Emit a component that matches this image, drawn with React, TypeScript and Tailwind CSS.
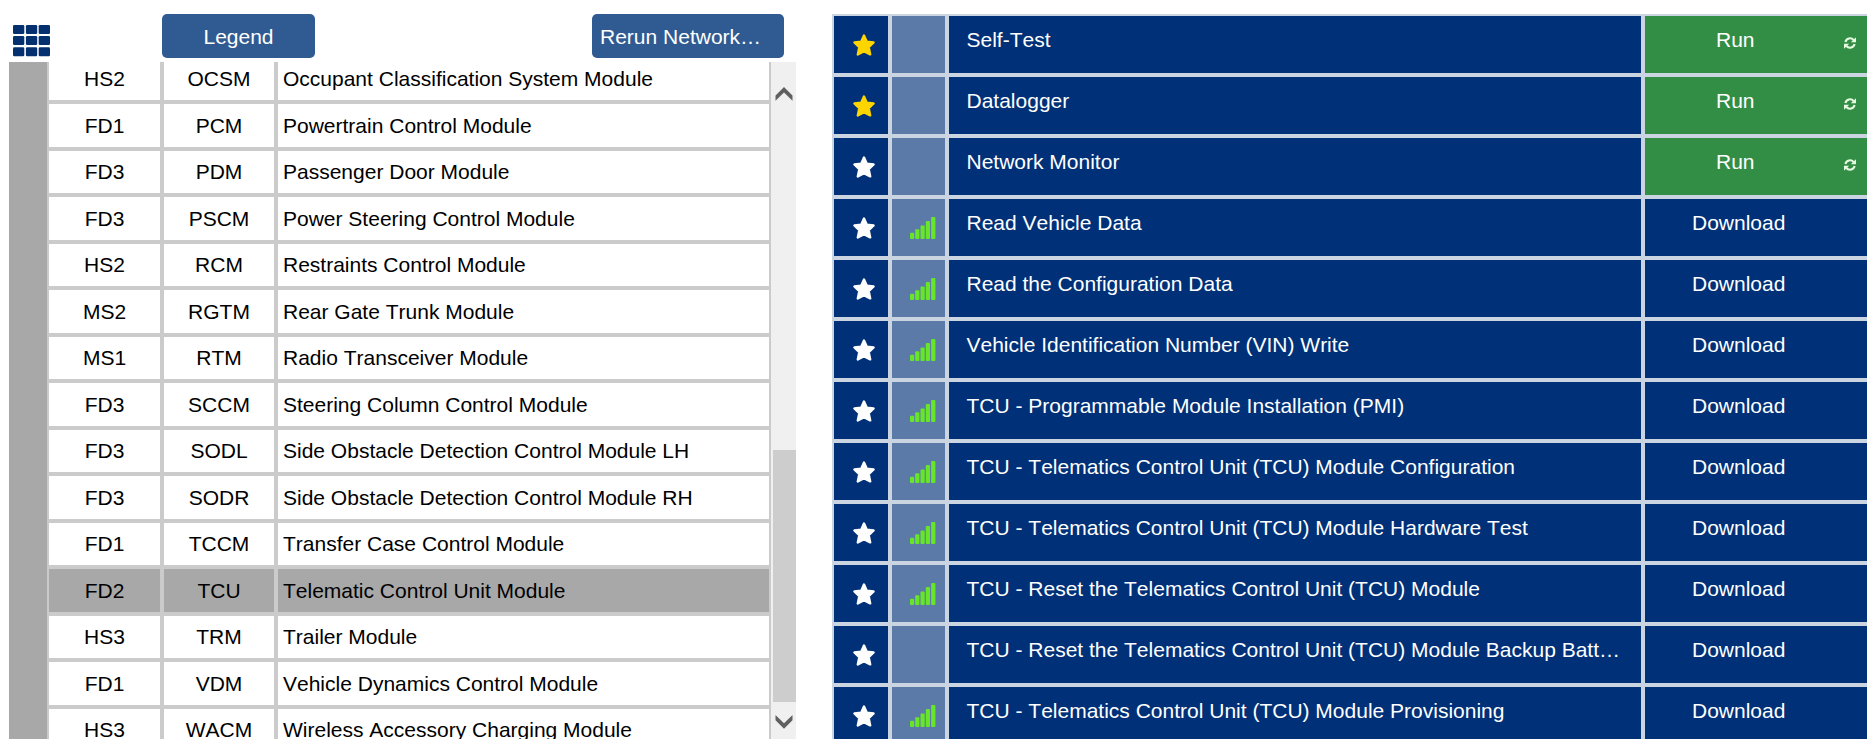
type Module = {
  bus: string;
  code: string;
  name: string;
};

type Task = {
  label: string;
  action: "Run" | "Download";
  favorite?: boolean;
  online?: boolean;
};

const modules: Module[] = [
  { bus: "HS2", code: "OCSM", name: "Occupant Classification System Module" },
  { bus: "FD1", code: "PCM", name: "Powertrain Control Module" },
  { bus: "FD3", code: "PDM", name: "Passenger Door Module" },
  { bus: "FD3", code: "PSCM", name: "Power Steering Control Module" },
  { bus: "HS2", code: "RCM", name: "Restraints Control Module" },
  { bus: "MS2", code: "RGTM", name: "Rear Gate Trunk Module" },
  { bus: "MS1", code: "RTM", name: "Radio Transceiver Module" },
  { bus: "FD3", code: "SCCM", name: "Steering Column Control Module" },
  { bus: "FD3", code: "SODL", name: "Side Obstacle Detection Control Module LH" },
  { bus: "FD3", code: "SODR", name: "Side Obstacle Detection Control Module RH" },
  { bus: "FD1", code: "TCCM", name: "Transfer Case Control Module" },
  { bus: "FD2", code: "TCU", name: "Telematic Control Unit Module" },
  { bus: "HS3", code: "TRM", name: "Trailer Module" },
  { bus: "FD1", code: "VDM", name: "Vehicle Dynamics Control Module" },
  { bus: "HS3", code: "WACM", name: "Wireless Accessory Charging Module" },
];

const tasks: Task[] = [
  { label: "Self-Test", action: "Run", favorite: true },
  { label: "Datalogger", action: "Run", favorite: true },
  { label: "Network Monitor", action: "Run" },
  { label: "Read Vehicle Data", action: "Download", online: true },
  { label: "Read the Configuration Data", action: "Download", online: true },
  { label: "Vehicle Identification Number (VIN) Write", action: "Download", online: true },
  { label: "TCU - Programmable Module Installation (PMI)", action: "Download", online: true },
  { label: "TCU - Telematics Control Unit (TCU) Module Configuration", action: "Download", online: true },
  { label: "TCU - Telematics Control Unit (TCU) Module Hardware Test", action: "Download", online: true },
  { label: "TCU - Reset the Telematics Control Unit (TCU) Module", action: "Download", online: true },
  { label: "TCU - Reset the Telematics Control Unit (TCU) Module Backup Battery", action: "Download" },
  { label: "TCU - Telematics Control Unit (TCU) Module Provisioning", action: "Download", online: true },
];

function GridIcon() {
  return (
    <svg viewBox="0 0 37 32" className="h-8 w-[37px]" fill="#05306f">
      {[0, 11, 22.2].map((y) =>
        [0, 12.9, 25.7].map((x) => <rect key={`${x}-${y}`} x={x} y={y} width="11.3" height="9" rx="1.3" />),
      )}
    </svg>
  );
}

function StarIcon({ active }: { active?: boolean }) {
  return (
    <svg
      viewBox="0 0 24 24"
      className={`h-6 w-6 ${active ? "text-[#ffd500]" : "text-white"}`}
      fill="currentColor"
      stroke="currentColor"
      strokeWidth="2.4"
      strokeLinejoin="round"
    >
      <path d="M12 2.6L14.8 8.7L21.6 9.5L16.7 14.2L18.2 21.4L12 18.2L5.8 21.4L7.3 14.2L2.4 9.5L9.2 8.7Z" />
    </svg>
  );
}

function SignalIcon() {
  return (
    <svg viewBox="0 0 26 22" className="h-[22px] w-[26px]" fill="#66e529">
      <rect x="0" y="15.8" width="4.2" height="6.2" rx="1" />
      <rect x="5.2" y="12.2" width="4.2" height="9.8" rx="1" />
      <rect x="10.5" y="8.4" width="4.2" height="13.6" rx="1" />
      <rect x="15.8" y="4" width="4.2" height="18" rx="1" />
      <rect x="21.1" y="0" width="4.3" height="22" rx="1" />
    </svg>
  );
}

function RefreshIcon() {
  return (
    <svg viewBox="0 0 12 12" className="h-3 w-3" fill="none" stroke="#e6fbe2" strokeWidth="2.1">
      <path d="M1.4 5A4.7 4.7 0 0 1 9.6 3M10.6 7A4.7 4.7 0 0 1 2.4 9" />
      <path d="M12 0.3V5.3H6.8ZM0 11.7V6.7H5.2Z" fill="#e6fbe2" stroke="none" />
    </svg>
  );
}

function Chevron({ down }: { down?: boolean }) {
  return (
    <svg viewBox="0 0 18 14" className="h-3.5 w-[18px]" fill="#606060">
      {down ? <path d="M0.5 0V5.3L9 13.7L17.5 5.3V0L9 8.2Z" /> : <path d="M0.5 13.7V8.4L9 0L17.5 8.4V13.7L9 5.5Z" />}
    </svg>
  );
}

function ModuleRow({ module, first }: { module: Module; first: boolean }) {
  const selected = module.code === "TCU";
  const cell = selected ? "bg-[#a8a8a8]" : "bg-white";

  return (
    <div
      className={`grid shrink-0 grid-cols-[111px_110px_491px] gap-x-1 border-b-4 border-[#cbcbcb] leading-6 ${first ? "h-[42px]" : "h-[46.5px]"}`}
    >
      <div className={`flex items-end justify-center pb-[9px] ${cell}`}>{module.bus}</div>
      <div className={`flex items-end justify-center pb-[9px] ${cell}`}>{module.code}</div>
      <div className={`flex items-end pb-[9px] pl-[5px] ${cell}`}>{module.name}</div>
    </div>
  );
}

function ModulePanel() {
  return (
    <section className="flex w-[796px] shrink-0 flex-col pl-[9px]">
      <div className="flex h-[62px] shrink-0">
        <div className="ml-1 mt-[25px] w-[149px]">
          <GridIcon />
        </div>
        <button className="mt-3.5 h-11 w-[153px] rounded-[5px] bg-[#2f5b92] pt-0.5 text-white">Legend</button>
        <button className="ml-[277px] mt-3.5 h-11 w-48 truncate rounded-[5px] bg-[#2f5b92] pl-2 pr-5 pt-0.5 text-left text-white">
          Rerun Network Test
        </button>
      </div>
      <div className="flex min-h-0 flex-1">
        <div className="w-[38px] bg-[#a8a8a8]" />
        <div className="flex flex-col overflow-hidden border-x-2 border-[#cbcbcb] bg-[#cbcbcb]">
          {modules.map((module, index) => (
            <ModuleRow key={module.code} module={module} first={index === 0} />
          ))}
        </div>
        <div className="flex flex-1 flex-col items-center bg-[#f0f0f0]">
          <div className="flex h-[388px] shrink-0 pt-[25px]">
            <Chevron />
          </div>
          <div className="ml-0.5 h-[252px] w-[23px] shrink-0 bg-[#cdcdcd]" />
          <div className="pt-[13px]">
            <Chevron down />
          </div>
        </div>
      </div>
    </section>
  );
}

function TaskRow({ task }: { task: Task }) {
  const run = task.action === "Run";

  return (
    <div className="grid h-[57px] shrink-0 grid-cols-[54px_53px_692px_222px] gap-x-1 leading-6 text-white">
      <div className="bg-[#003178] pl-[17.5px] pt-[17px]">
        <StarIcon active={task.favorite} />
      </div>
      <div className="bg-[#5b7aa8] pl-[18px] pt-[18px]">{task.online && <SignalIcon />}</div>
      <div className="truncate bg-[#003178] pl-[17.5px] pr-4 pt-3">{task.label}</div>
      <div className={`flex pt-3 ${run ? "bg-[#328e45] pl-[71px]" : "bg-[#003178] pl-[47px]"}`}>
        {task.action}
        {run && (
          <span className="ml-auto mr-[11px] mt-[9px]">
            <RefreshIcon />
          </span>
        )}
      </div>
    </div>
  );
}

export default function App() {
  return (
    <main className="flex h-[739px] w-[1867px] overflow-hidden bg-white font-['Liberation_Sans',Arial,sans-serif] text-[21px] text-black [font-kerning:none]">
      <ModulePanel />
      <section className="ml-9 mt-3.5 flex flex-1 flex-col gap-y-1 overflow-hidden border-l-2 border-t-2 border-[#cbd5e2] bg-[#cbd5e2]">
        {tasks.map((task) => (
          <TaskRow key={task.label} task={task} />
        ))}
      </section>
    </main>
  );
}
